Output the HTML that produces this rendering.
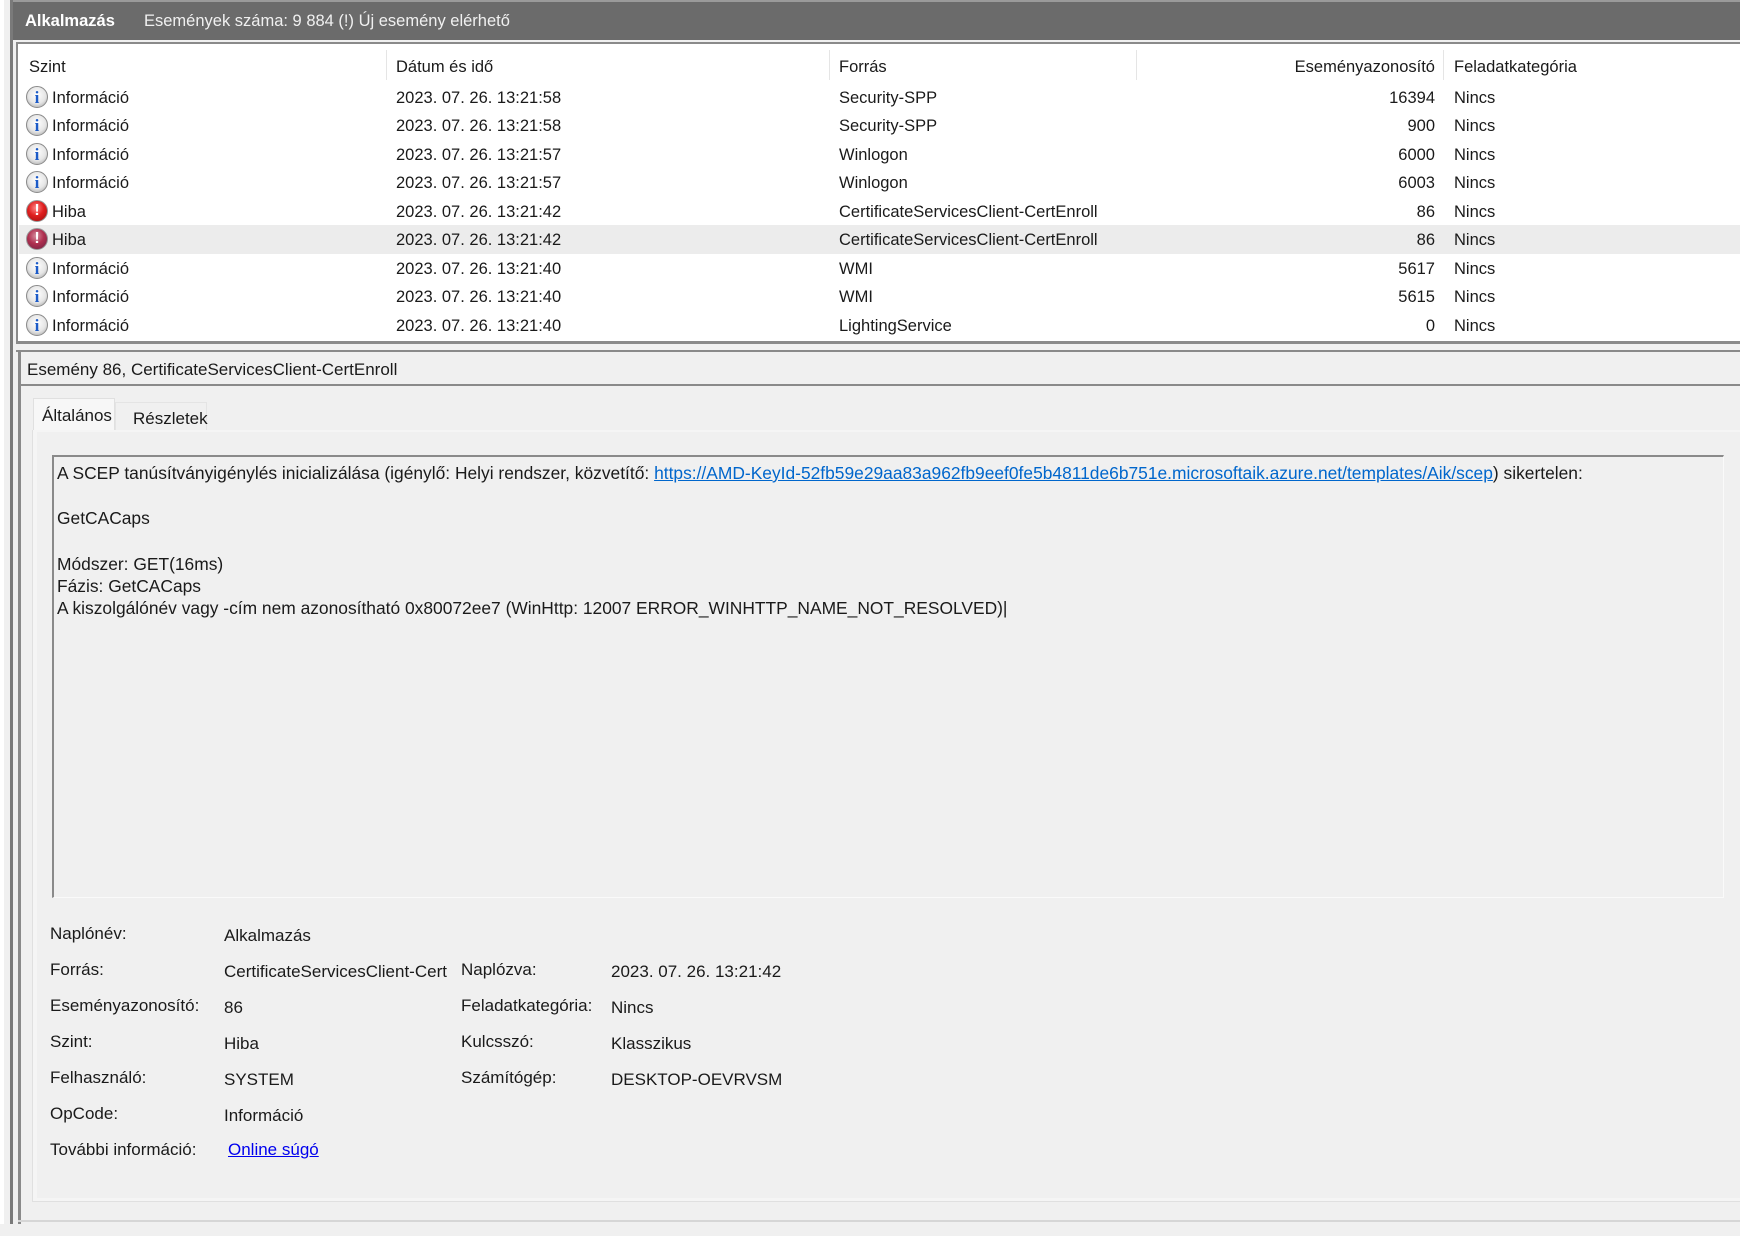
<!DOCTYPE html>
<html><head><meta charset="utf-8"><style>
*{margin:0;padding:0;box-sizing:border-box}
body{width:1740px;height:1236px;background:#f0f0f0;font-family:"Liberation Sans",sans-serif;font-size:16.5px;color:#1a1a1a;position:relative;overflow:hidden}
.a{position:absolute;white-space:nowrap}
.ic{position:absolute;width:22px;height:22px;border-radius:50%}
.info{background:radial-gradient(circle at 50% 40%,#fff 0,#e6e6e6 55%,#9a9a9a 100%);border:1px solid #8a8a8a}
.info:after{content:"i";position:absolute;left:0;right:0;top:1px;text-align:center;font:bold 17px "Liberation Serif",serif;color:#1c5bc8}
.err{background:radial-gradient(circle at 45% 35%,#ff8a8a 0,#e02020 45%,#9a0d0d 100%);border:1px solid #999}
.err.sel{background:radial-gradient(circle at 45% 35%,#d590a0 0,#b03050 45%,#6a2040 100%)}
.err:after{content:"!";position:absolute;left:0;right:0;top:1px;text-align:center;font:bold 16px "Liberation Sans",sans-serif;color:#fff}
.tb{font-size:17.4px}
.pr{font-size:17px}
a{color:#0066cc}
</style></head><body>
<div class="a" style="left:0;top:0;width:4px;height:1236px;background:#fff"></div>
<div class="a" style="left:10px;top:0;width:3px;height:1225px;background:#7a7a7a"></div>
<div class="a" style="left:13px;top:0;width:1727px;height:40px;background:#6b6b6b;border-top:2px solid #9a9a9a"></div>
<div class="a" style="left:25px;top:12px;color:#fff;font-weight:bold;font-size:16.5px">Alkalmazás</div>
<div class="a" style="left:144px;top:12px;color:#f0f0f0;font-size:16.5px">Események száma: 9 884 (!) Új esemény elérhető</div>
<div class="a" style="left:16px;top:42px;width:1724px;height:302px;background:#fff;border:2px solid #8a8a8a;border-right:none"></div>
<div class="a" style="left:386px;top:50px;width:1px;height:30px;background:#e5e5e5"></div>
<div class="a" style="left:829px;top:50px;width:1px;height:30px;background:#e5e5e5"></div>
<div class="a" style="left:1136px;top:50px;width:1px;height:30px;background:#e5e5e5"></div>
<div class="a" style="left:1443px;top:50px;width:1px;height:30px;background:#e5e5e5"></div>
<div class="a" style="left:29px;top:58px">Szint</div>
<div class="a" style="left:396px;top:58px">Dátum és idő</div>
<div class="a" style="left:839px;top:58px">Forrás</div>
<div class="a" style="left:1235px;top:58px;width:200px;text-align:right">Eseményazonosító</div>
<div class="a" style="left:1454px;top:58px">Feladatkategória</div>
<div class="a" style="left:19px;top:225px;width:1721px;height:29px;background:#ececec"></div>

<div class="ic info" style="left:26px;top:86px"></div><div class="a" style="left:52px;top:89px">Információ</div><div class="a" style="left:396px;top:89px">2023. 07. 26. 13:21:58</div><div class="a" style="left:839px;top:89px">Security-SPP</div><div class="a" style="left:1300px;top:89px;width:135px;text-align:right">16394</div><div class="a" style="left:1454px;top:89px">Nincs</div>
<div class="ic info" style="left:26px;top:114px"></div><div class="a" style="left:52px;top:117px">Információ</div><div class="a" style="left:396px;top:117px">2023. 07. 26. 13:21:58</div><div class="a" style="left:839px;top:117px">Security-SPP</div><div class="a" style="left:1300px;top:117px;width:135px;text-align:right">900</div><div class="a" style="left:1454px;top:117px">Nincs</div>
<div class="ic info" style="left:26px;top:143px"></div><div class="a" style="left:52px;top:146px">Információ</div><div class="a" style="left:396px;top:146px">2023. 07. 26. 13:21:57</div><div class="a" style="left:839px;top:146px">Winlogon</div><div class="a" style="left:1300px;top:146px;width:135px;text-align:right">6000</div><div class="a" style="left:1454px;top:146px">Nincs</div>
<div class="ic info" style="left:26px;top:171px"></div><div class="a" style="left:52px;top:174px">Információ</div><div class="a" style="left:396px;top:174px">2023. 07. 26. 13:21:57</div><div class="a" style="left:839px;top:174px">Winlogon</div><div class="a" style="left:1300px;top:174px;width:135px;text-align:right">6003</div><div class="a" style="left:1454px;top:174px">Nincs</div>
<div class="ic err" style="left:26px;top:200px"></div><div class="a" style="left:52px;top:203px">Hiba</div><div class="a" style="left:396px;top:203px">2023. 07. 26. 13:21:42</div><div class="a" style="left:839px;top:203px">CertificateServicesClient-CertEnroll</div><div class="a" style="left:1300px;top:203px;width:135px;text-align:right">86</div><div class="a" style="left:1454px;top:203px">Nincs</div>
<div class="ic err sel" style="left:26px;top:228px"></div><div class="a" style="left:52px;top:231px">Hiba</div><div class="a" style="left:396px;top:231px">2023. 07. 26. 13:21:42</div><div class="a" style="left:839px;top:231px">CertificateServicesClient-CertEnroll</div><div class="a" style="left:1300px;top:231px;width:135px;text-align:right">86</div><div class="a" style="left:1454px;top:231px">Nincs</div>
<div class="ic info" style="left:26px;top:257px"></div><div class="a" style="left:52px;top:260px">Információ</div><div class="a" style="left:396px;top:260px">2023. 07. 26. 13:21:40</div><div class="a" style="left:839px;top:260px">WMI</div><div class="a" style="left:1300px;top:260px;width:135px;text-align:right">5617</div><div class="a" style="left:1454px;top:260px">Nincs</div>
<div class="ic info" style="left:26px;top:285px"></div><div class="a" style="left:52px;top:288px">Információ</div><div class="a" style="left:396px;top:288px">2023. 07. 26. 13:21:40</div><div class="a" style="left:839px;top:288px">WMI</div><div class="a" style="left:1300px;top:288px;width:135px;text-align:right">5615</div><div class="a" style="left:1454px;top:288px">Nincs</div>
<div class="ic info" style="left:26px;top:314px"></div><div class="a" style="left:52px;top:317px">Információ</div><div class="a" style="left:396px;top:317px">2023. 07. 26. 13:21:40</div><div class="a" style="left:839px;top:317px">LightingService</div><div class="a" style="left:1300px;top:317px;width:135px;text-align:right">0</div><div class="a" style="left:1454px;top:317px">Nincs</div>
<div class="a" style="left:16px;top:341px;width:1724px;height:3px;background:#8a8a8a"></div>
<div class="a" style="left:16px;top:350px;width:1724px;height:2px;background:#8a8a8a"></div>
<div class="a" style="left:18px;top:352px;width:3px;height:872px;background:#8a8a8a"></div>
<div class="a" style="left:21px;top:384px;width:1719px;height:2px;background:#8a8a8a"></div>
<div class="a" style="left:27px;top:360px;font-size:17px">Esemény 86, CertificateServicesClient-CertEnroll</div>
<div class="a" style="left:33px;top:398px;width:82px;height:34px;background:#f7f7f7;border:1px solid #e0e0e0;border-bottom:none"></div>
<div class="a" style="left:115px;top:402px;width:92px;height:29px;background:#f0f0f0;border:1px solid #e4e4e4;border-bottom:none"></div>
<div class="a" style="left:42px;top:406px;font-size:17px">Általános</div>
<div class="a" style="left:133px;top:409px;font-size:17px">Részletek</div>
<div class="a" style="left:32px;top:430px;width:1708px;height:772px;background:#f5f5f5;border-left:1px solid #e0e0e0;border-bottom:1px solid #e0e0e0"></div>
<div class="a" style="left:37px;top:432px;width:1703px;height:766px;background:#f0f0f0"></div>
<div class="a" style="left:52px;top:455px;width:1672px;height:443px;background:#f0f0f0;border-top:2px solid #8a8a8a;border-left:2px solid #8a8a8a;border-right:1px solid #fafafa;border-bottom:1px solid #fafafa"></div>
<div class="a tb" style="left:57px;top:463px">A SCEP tanúsítványigénylés inicializálása (igénylő: Helyi rendszer, közvetítő: <a href="#">https://AMD-KeyId-52fb59e29aa83a962fb9eef0fe5b4811de6b751e.microsoftaik.azure.net/templates/Aik/scep</a>) sikertelen:</div>
<div class="a tb" style="left:57px;top:508px">GetCACaps</div>
<div class="a tb" style="left:57px;top:554px">Módszer: GET(16ms)</div>
<div class="a tb" style="left:57px;top:576px">Fázis: GetCACaps</div>
<div class="a tb" style="left:57px;top:598px">A kiszolgálónév vagy -cím nem azonosítható 0x80072ee7 (WinHttp: 12007 ERROR_WINHTTP_NAME_NOT_RESOLVED)|</div>
<div class="a pr" style="left:50px;top:924px">Naplónév:</div><div class="a pr" style="left:224px;top:926px">Alkalmazás</div>
<div class="a pr" style="left:50px;top:960px">Forrás:</div><div class="a pr" style="left:224px;top:962px">CertificateServicesClient-Cert</div>
<div class="a pr" style="left:461px;top:960px">Naplózva:</div><div class="a pr" style="left:611px;top:962px">2023. 07. 26. 13:21:42</div>
<div class="a pr" style="left:50px;top:996px">Eseményazonosító:</div><div class="a pr" style="left:224px;top:998px">86</div>
<div class="a pr" style="left:461px;top:996px">Feladatkategória:</div><div class="a pr" style="left:611px;top:998px">Nincs</div>
<div class="a pr" style="left:50px;top:1032px">Szint:</div><div class="a pr" style="left:224px;top:1034px">Hiba</div>
<div class="a pr" style="left:461px;top:1032px">Kulcsszó:</div><div class="a pr" style="left:611px;top:1034px">Klasszikus</div>
<div class="a pr" style="left:50px;top:1068px">Felhasználó:</div><div class="a pr" style="left:224px;top:1070px">SYSTEM</div>
<div class="a pr" style="left:461px;top:1068px">Számítógép:</div><div class="a pr" style="left:611px;top:1070px">DESKTOP-OEVRVSM</div>
<div class="a pr" style="left:50px;top:1104px">OpCode:</div><div class="a pr" style="left:224px;top:1106px">Információ</div>
<div class="a pr" style="left:50px;top:1140px">További információ:</div><div class="a pr" style="left:228px;top:1140px"><a href="#" style="color:#0000ee">Online súgó</a></div>
<div class="a" style="left:18px;top:1220px;width:1722px;height:2px;background:#d6d6d6"></div>
<div class="a" style="left:0;top:1224px;width:1740px;height:12px;background:#f0f0f0"></div>
</body></html>
